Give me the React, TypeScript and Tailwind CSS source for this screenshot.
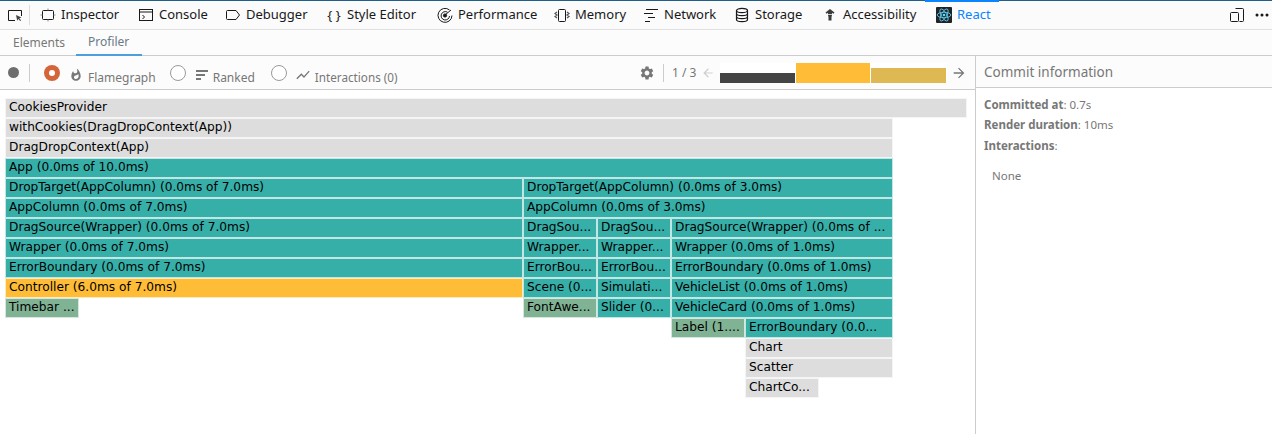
import React from 'react';
import { MdArrowBack, MdArrowForward, MdSettings, MdWhatshot, MdShowChart } from 'react-icons/md';

const TEAL = 'bg-[#37afa9]';
const GRAY = 'bg-[#dddddd]';
const SAGE = 'bg-[#80b294]';
const AMBER = 'bg-[#ffbc36]';

type Bar = { label?: string; width: number; color?: string };

// widths in px, bars without a label are the empty space before a bar
const ROWS: Bar[][] = [
  [{ label: 'CookiesProvider', width: 962, color: GRAY }],
  [{ label: 'withCookies(DragDropContext(App))', width: 888, color: GRAY }],
  [{ label: 'DragDropContext(App)', width: 888, color: GRAY }],
  [{ label: 'App (0.0ms of 10.0ms)', width: 888, color: TEAL }],
  [
    { label: 'DropTarget(AppColumn) (0.0ms of 7.0ms)', width: 518, color: TEAL },
    { label: 'DropTarget(AppColumn) (0.0ms of 3.0ms)', width: 370, color: TEAL },
  ],
  [
    { label: 'AppColumn (0.0ms of 7.0ms)', width: 518, color: TEAL },
    { label: 'AppColumn (0.0ms of 3.0ms)', width: 370, color: TEAL },
  ],
  [
    { label: 'DragSource(Wrapper) (0.0ms of 7.0ms)', width: 518, color: TEAL },
    { label: 'DragSou...', width: 74, color: TEAL },
    { label: 'DragSou...', width: 74, color: TEAL },
    { label: 'DragSource(Wrapper) (0.0ms of ...', width: 222, color: TEAL },
  ],
  [
    { label: 'Wrapper (0.0ms of 7.0ms)', width: 518, color: TEAL },
    { label: 'Wrapper...', width: 74, color: TEAL },
    { label: 'Wrapper...', width: 74, color: TEAL },
    { label: 'Wrapper (0.0ms of 1.0ms)', width: 222, color: TEAL },
  ],
  [
    { label: 'ErrorBoundary (0.0ms of 7.0ms)', width: 518, color: TEAL },
    { label: 'ErrorBou...', width: 74, color: TEAL },
    { label: 'ErrorBou...', width: 74, color: TEAL },
    { label: 'ErrorBoundary (0.0ms of 1.0ms)', width: 222, color: TEAL },
  ],
  [
    { label: 'Controller (6.0ms of 7.0ms)', width: 518, color: AMBER },
    { label: 'Scene (0...', width: 74, color: TEAL },
    { label: 'Simulati...', width: 74, color: TEAL },
    { label: 'VehicleList (0.0ms of 1.0ms)', width: 222, color: TEAL },
  ],
  [
    { label: 'Timebar ...', width: 74, color: SAGE },
    { width: 444 },
    { label: 'FontAwe...', width: 74, color: SAGE },
    { label: 'Slider (0...', width: 74, color: TEAL },
    { label: 'VehicleCard (0.0ms of 1.0ms)', width: 222, color: TEAL },
  ],
  [
    { width: 666 },
    { label: 'Label (1....', width: 74, color: SAGE },
    { label: 'ErrorBoundary (0.0...', width: 148, color: TEAL },
  ],
  [{ width: 740 }, { label: 'Chart', width: 148, color: GRAY }],
  [{ width: 740 }, { label: 'Scatter', width: 148, color: GRAY }],
  [{ width: 740 }, { label: 'ChartCo...', width: 74, color: GRAY }],
];

const InspectorIcon = () => (
  <svg width="16" height="16" viewBox="0 0 16 16" fill="none" stroke="#18191a" strokeWidth="1">
    <rect x="2.500" y="3.500" width="11" height="9" rx="1" />
    <path d="M8 1.500v2M8 12.500v2M0.500 8h2M13.500 8h2" stroke="#8a8a8a" />
  </svg>
);
const ConsoleIcon = () => (
  <svg width="16" height="16" viewBox="0 0 16 16" fill="none" stroke="#18191a" strokeWidth="1">
    <rect x="1.500" y="2.500" width="13" height="11" />
    <path d="M1.500 5h13M4.500 8l2 2-2 2" />
  </svg>
);
const DebuggerIcon = () => (
  <svg width="16" height="16" viewBox="0 0 16 16" fill="none" stroke="#18191a" strokeWidth="1">
    <path d="M2.500 3.500h8.500l3.500 4.500-3.500 4.500H2.500a1 1 0 0 1-1-1v-7a1 1 0 0 1 1-1z" />
  </svg>
);
const PerformanceIcon = () => (
  <svg width="16" height="16" viewBox="0 0 16 16" fill="none" stroke="#18191a" strokeWidth="1">
    <path d="M12.500 3A7 7 0 1 0 15 8.500" />
    <path d="M10.500 5.200A4.200 4.200 0 1 0 12.500 9" />
    <path d="M14 3L8 8" />
    <circle cx="8" cy="8.500" r="1.600" fill="#18191a" />
  </svg>
);
const MemoryIcon = () => (
  <svg width="16" height="16" viewBox="0 0 16 16" fill="none" stroke="#18191a" strokeWidth="1">
    <rect x="4.500" y="2.500" width="7" height="12" rx="1" />
    <path d="M3 5L1 6.500 3 8 1 9.500 3 11M13 5l2 1.500L13 8l2 1.500L13 11" strokeWidth="1.200" stroke="#555555" />
  </svg>
);
const NetworkIcon = () => (
  <svg width="16" height="16" viewBox="0 0 16 16" fill="none" stroke="#18191a" strokeWidth="1">
    <path d="M3 2.500h12M1 6.500h9M5 10.500h7M2 14.500h5" />
  </svg>
);
const StorageIcon = () => (
  <svg width="16" height="16" viewBox="0 0 16 16" fill="none" stroke="#18191a" strokeWidth="1.200">
    <ellipse cx="8" cy="3.500" rx="5.500" ry="2.200" />
    <path d="M2.500 3.500v9c0 1.200 2.500 2.200 5.500 2.200s5.500-1 5.500-2.200v-9M2.500 6.500c0 1.200 2.500 2.200 5.500 2.200s5.500-1 5.500-2.200M2.500 9.500c0 1.200 2.500 2.200 5.500 2.200s5.500-1 5.500-2.200" />
  </svg>
);
const AccessibilityIcon = () => (
  <svg width="16" height="16" viewBox="0 0 16 16" fill="#3a3a3a">
    <path d="M8 2l4.500 3.500-1 1.200L10 5.800v1.200H6V5.800L4.500 6.700l-1-1.200z" />
    <path d="M5.900 7.800h4.200L9.500 10v3.500h-3V10z" />
  </svg>
);
const ReactIcon = () => (
  <svg width="16" height="16" viewBox="0 0 16 16">
    <rect width="16" height="16" rx="1" fill="#20232a" />
    <g fill="none" stroke="#61dafb" strokeWidth="0.800">
      <ellipse cx="8" cy="8" rx="6.800" ry="2.700" />
      <ellipse cx="8" cy="8" rx="6.800" ry="2.700" transform="rotate(60 8 8)" />
      <ellipse cx="8" cy="8" rx="6.800" ry="2.700" transform="rotate(120 8 8)" />
    </g>
    <circle cx="8" cy="8" r="1.300" fill="#61dafb" />
  </svg>
);

const TABS = [
  { name: 'Inspector', icon: <InspectorIcon />, width: 'w-[98px]' },
  { name: 'Console', icon: <ConsoleIcon />, width: 'w-[87px]' },
  { name: 'Debugger', icon: <DebuggerIcon />, width: 'w-[101px]' },
  { name: 'Style Editor', icon: <span className="w-4 text-center text-[13px] leading-4 text-[#18191a]">{'{ }'}</span>, width: 'w-[111px]' },
  { name: 'Performance', icon: <PerformanceIcon />, width: 'w-[117px]' },
  { name: 'Memory', icon: <MemoryIcon />, width: 'w-[89px]' },
  { name: 'Network', icon: <NetworkIcon />, width: 'w-[91px]' },
  { name: 'Storage', icon: <StorageIcon />, width: 'w-[88px]' },
  { name: 'Accessibility', icon: <AccessibilityIcon />, width: 'w-[103px]' },
];

function Radio({ checked }: { checked?: boolean }) {
  if (checked) {
    return (
      <span className="flex h-4 w-4 items-center justify-center rounded-full bg-[#d5643a]">
        <span className="h-[6px] w-[6px] rounded-full bg-white" />
      </span>
    );
  }
  return <span className="h-4 w-4 rounded-full border border-[#9a9a9a] bg-white" />;
}

function RankedIcon() {
  return (
    <svg width="14" height="14" viewBox="0 0 14 14" fill="#777777">
      <rect x="1" y="2" width="12" height="2" />
      <rect x="1" y="6" width="9" height="2" />
      <rect x="1" y="10" width="5" height="2" />
    </svg>
  );
}

function FlameRow({ bars }: { bars: Bar[] }) {
  return (
    <div className="flex h-5">
      {bars.map((bar, i) =>
        bar.label ? (
          <div
            key={i}
            style={{ width: bar.width }}
            className={`${bar.color} h-5 shrink-0 overflow-hidden whitespace-nowrap border border-[#ffffffb0] pl-[3px] font-['DejaVu_Sans',sans-serif] text-[12.200px] leading-[16px] text-black`}
          >
            {bar.label}
          </div>
        ) : (
          <div key={i} style={{ width: bar.width }} className="shrink-0" />
        ),
      )}
    </div>
  );
}

export default function App() {
  return (
    <div className="flex h-[434px] w-[1272px] flex-col overflow-hidden bg-white font-['Noto_Sans',sans-serif]">
      {/* devtools toolbar */}
      <div className="flex h-[30px] shrink-0 items-center border-t border-b border-t-[#1f5f8b] border-b-[#e0e0e1] bg-[#fbfbfb]">
        <div className="flex h-5 w-[30px] shrink-0 items-center justify-center border-r border-[#dcdcdc]">
          <svg width="16" height="16" viewBox="0 0 16 16" fill="none" stroke="#18191a" strokeWidth="1">
            <path d="M8 13.500H1.500v-10h13V9" />
            <path d="M9 8l5.500 2.500-2.200.8 1.800 2-.9.8-1.800-2-1.200 1.700z" fill="#444444" stroke="none" />
          </svg>
        </div>
        <div className="flex pl-[10px]">
          {TABS.map((tab) => (
            <div key={tab.name} className={`${tab.width} flex items-center gap-[5px] text-[13px] text-[#18191a]`}>
              {tab.icon}
              <span>{tab.name}</span>
            </div>
          ))}
        </div>
        <div className="relative flex h-full w-[74px] items-center gap-[5px] pl-[11px] text-[13px] text-[#0a84ff]">
          <span className="absolute inset-x-0 -top-px h-[2px] bg-[#0a84ff]" />
          <ReactIcon />
          <span>React</span>
        </div>
        <div className="ml-auto flex items-center gap-[9px] pr-[2px]">
          <svg width="16" height="16" viewBox="0 0 16 16" fill="none" stroke="#18191a" strokeWidth="1">
            <path d="M6.500 1.500h7a1 1 0 0 1 1 1v11a1 1 0 0 1-1 1h-3" />
            <rect x="1.500" y="5.500" width="8" height="9" rx="1" />
          </svg>
          <svg width="16" height="16" viewBox="0 0 16 16" fill="#18191a">
            <circle cx="3" cy="8" r="1.500" />
            <circle cx="8" cy="8" r="1.500" />
            <circle cx="13" cy="8" r="1.500" />
          </svg>
        </div>
      </div>

      {/* Elements / Profiler */}
      <div className="flex h-[26px] shrink-0 border-b border-[#cccccc] bg-[#fcfcfc] text-[12px] text-[#777777]">
        <div className="flex w-[76px] items-center pl-[13px]">Elements</div>
        <div className="-mb-px flex w-[66px] items-center border-b-2 border-[#4a9fdd] pl-[12px] text-[#6a7a88]">Profiler</div>
      </div>

      <div className="flex min-h-0 flex-1">
        <div className="flex w-[975px] shrink-0 flex-col">
          {/* profiler controls */}
          <div className="flex h-[34px] shrink-0 items-center border-b border-[#cccccc] bg-[#fcfcfc] text-[12px] text-[#777777]">
            <span className="ml-[8px] h-[11px] w-[11px] rounded-full bg-[#6e6e6e]" />
            <span className="ml-[10px] h-[18px] w-px bg-[#cccccc]" />
            <div className="ml-[14px] flex items-center">
              <Radio checked />
              <MdWhatshot size={14} className="ml-[9px] mt-[5px]" />
              <span className="ml-[5px] mt-[11px] leading-4">Flamegraph</span>
            </div>
            <div className="ml-[14px] flex items-center">
              <Radio />
              <span className="ml-[9px] mt-[5px]"><RankedIcon /></span>
              <span className="ml-[4px] mt-[11px] leading-4">Ranked</span>
            </div>
            <div className="ml-[16px] flex items-center">
              <Radio />
              <MdShowChart size={16} className="ml-[8px] mt-[5px]" />
              <span className="ml-[4px] mt-[9px] text-[11.700px] leading-4">Interactions (0)</span>
            </div>
            <div className="ml-auto flex items-center pr-[8px]">
              <MdSettings size={16} className="text-[#777777]" />
              <span className="ml-[8px] h-[18px] w-px bg-[#cccccc]" />
              <span className="ml-[8px] w-[26px] text-[#777777]">1 / 3</span>
              <MdArrowBack size={14} className="ml-[3px] text-[#cfcfcf]" />
              <div className="ml-[5px] flex h-5 w-[227px] items-end gap-px bg-white">
                <span className="h-[10px] w-[75px] bg-[#444444]" />
                <span className="h-5 w-[74px] bg-[#ffbc36]" />
                <span className="h-[15px] w-[75px] bg-[#ddb853]" />
              </div>
              <MdArrowForward size={16} className="ml-[4px] text-[#777777]" />
            </div>
          </div>
          {/* flamegraph */}
          <div className="flex flex-col px-[5px] pt-[8px]">
            {ROWS.map((bars, i) => (
              <FlameRow key={i} bars={bars} />
            ))}
          </div>
        </div>

        {/* commit sidebar */}
        <div className="flex flex-1 flex-col border-l border-[#cccccc] text-[#777777]">
          <div className="flex h-[32px] shrink-0 items-center border-b border-[#cccccc] bg-[#fcfcfc] pl-[8px] pt-[2px] text-[13.500px]">
            Commit information
          </div>
          <div className="flex flex-col pl-[8px] pt-[7px] text-[11.500px] leading-[20px]">
            <div><span className="font-bold">Committed at</span>: 0.7s</div>
            <div><span className="font-bold">Render duration</span>: 10ms</div>
            <div className="pt-px"><span className="font-bold">Interactions</span>:</div>
            <div className="pl-[8px] pt-[10px]">None</div>
          </div>
        </div>
      </div>
    </div>
  );
}
